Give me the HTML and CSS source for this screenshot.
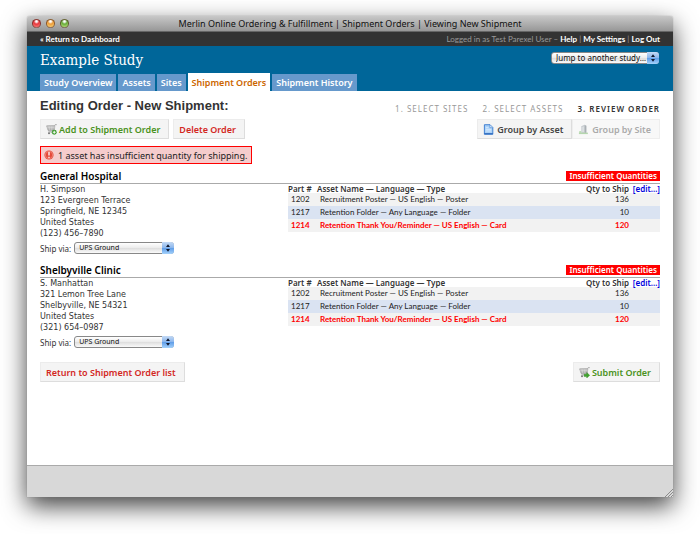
FILE: index.html
```html
<!DOCTYPE html>
<html lang="en">
<head>
<meta charset="utf-8">
<title>Merlin Online Ordering &amp; Fulfillment | Shipment Orders | Viewing New Shipment</title>
<link rel="stylesheet" href="styles.css">
</head>
<body>
<svg class="sprites" aria-hidden="true">
  <defs>
    <linearGradient id="aqua" x1="0" y1="0" x2="0" y2="1">
      <stop offset="0" stop-color="#c4daf5"/><stop offset=".48" stop-color="#8bb6ec"/>
      <stop offset=".52" stop-color="#5f9de8"/><stop offset="1" stop-color="#a5d2fb"/>
    </linearGradient>
    <linearGradient id="metal" x1="0" y1="0" x2="0" y2="1">
      <stop offset="0" stop-color="#d8d8d8"/><stop offset="1" stop-color="#8c8c8c"/>
    </linearGradient>
    <symbol id="stepper" viewBox="0 0 12 12">
      <rect width="12" height="12" fill="url(#aqua)"/>
      <path d="M6 2.2 8 5H4zM6 9.8 4 7h4z" fill="#10182c"/>
    </symbol>
    <symbol id="cart" viewBox="0 0 12 12">
      <path d="M.5 2.2 9.3 2l.8-1.3h1.6" fill="none" stroke="#999" stroke-width=".9"/>
      <path d="M.7 2.3h9L9 7H2.2z" fill="url(#metal)" stroke="#999" stroke-width=".5"/>
      <path d="M1.4 4.2h7.8M1.9 5.7h7M3.4 2.5l.6 4.3M6.3 2.5v4.3" stroke="#eee" stroke-width=".4"/>
      <path d="M9 7 8.3 8.6H2.6" fill="none" stroke="#888" stroke-width=".8"/>
      <circle cx="3.3" cy="10" r="1.1" fill="#777"/>
    </symbol>
  </defs>
</svg>
<div class="window">
  <header class="titlebar">
    <div class="lights">
      <span class="light red"></span><span class="light amber"></span><span class="light green"></span>
    </div>
    <div class="caption">Merlin Online Ordering &amp; Fulfillment | Shipment Orders | Viewing New Shipment</div>
  </header>

  <nav class="userbar">
    <a href="#">« Return to Dashboard</a>
    <div>Logged in as Test Parexel User – <a href="#">Help</a> | <a href="#">My Settings</a> | <a href="#">Log Out</a></div>
  </nav>

  <div class="masthead">
    <div class="brand">
      <div class="study">Example Study</div>
      <span class="picker jump">
        <select aria-label="Jump to another study"><option>Jump to another study…</option></select>
        <svg aria-hidden="true"><use href="#stepper"/></svg>
      </span>
    </div>
    <nav class="tabs">
      <a href="#">Study Overview</a>
      <a href="#">Assets</a>
      <a href="#">Sites</a>
      <a href="#" class="current" aria-current="page">Shipment Orders</a>
      <a href="#">Shipment History</a>
    </nav>
  </div>

  <main>
    <div class="heading">
      <h1>Editing Order - New Shipment:</h1>
      <ol class="steps">
        <li>1. Select Sites</li>
        <li>2. Select Assets</li>
        <li class="current">3. Review Order</li>
      </ol>
    </div>

    <div class="toolbar">
      <div class="actions">
        <button class="go" type="button">
          <svg viewBox="0 0 12 12" aria-hidden="true"><use href="#cart"/><circle cx="9" cy="9" r="2.7" fill="#3d9b2c"/><path d="M9 7.4v3.2M7.4 9h3.2" stroke="#fff" stroke-width="1"/></svg>
          Add to Shipment Order</button>
        <button class="danger" type="button">Delete Order</button>
      </div>
      <div class="grouping">
        <button type="button">
          <svg viewBox="0 0 12 12" aria-hidden="true"><path d="M1.5.8h6.2l3 3v7.4H1.5z" fill="#a9d0f7" stroke="#3478cf" stroke-width="1"/><path d="M7.5 1v3h3" fill="#e9f4ff" stroke="#3478cf" stroke-width=".6"/><path d="M3 4h3M3 5.8h6M3 7.6h6" stroke="#dcedff" stroke-width=".9"/><path d="M1.5 10.6h9.2" stroke="#2a66bb" stroke-width="1.2"/></svg>
          Group by Asset</button>
        <button type="button" disabled>
          <svg viewBox="0 0 12 12" aria-hidden="true"><path d="M3.5 2.5 7 .8v9.4H3.5z" fill="#c9ced2"/><path d="M7 .8 9.2 2v8.2H7z" fill="#aab0b5"/><path d="M4.6 3.2v5.6M5.9 2.8v6" stroke="#eef2f5" stroke-width=".6"/><path d="M1 10.2h9.8" stroke="#b5d6ae" stroke-width="1.6"/><circle cx="2.4" cy="8.8" r="1.3" fill="#bcdcb4"/></svg>
          Group by Site</button>
      </div>
    </div>

    <div class="alert" role="alert">
      <svg viewBox="0 0 10 10" aria-hidden="true"><circle cx="5" cy="5" r="4.6" fill="#e5493a"/><circle cx="5" cy="5" r="3.7" fill="none" stroke="#f3a196" stroke-width=".6"/><path d="M5 2v3.6M5 6.8v1.3" stroke="#fff" stroke-width="1.3"/></svg>
      1 asset has insufficient quantity for shipping.
    </div>

    <section class="site">
      <div class="site-head"><h2>General Hospital</h2><strong class="badge">Insufficient Quantities</strong></div>
      <div class="site-body">
        <div class="where">
          <address>H. Simpson<br>123 Evergreen Terrace<br>Springfield, NE 12345<br>United States<br>(123) 456–7890</address>
          <div class="via">
            <label for="via1">Ship via:</label>
            <span class="picker"><select id="via1"><option>UPS Ground</option></select><svg aria-hidden="true"><use href="#stepper"/></svg></span>
          </div>
        </div>
        <table>
          <thead><tr><th>Part #</th><th>Asset Name — Language — Type</th><th class="qty">Qty to Ship</th><th class="edit"><a href="#">[edit…]</a></th></tr></thead>
          <tbody>
            <tr><td>1202</td><td>Recruitment Poster — US English — Poster</td><td class="qty">136</td><td></td></tr>
            <tr><td>1217</td><td>Retention Folder — Any Language — Folder</td><td class="qty">10</td><td></td></tr>
            <tr class="short"><td>1214</td><td>Retention Thank You/Reminder — US English — Card</td><td class="qty">120</td><td></td></tr>
          </tbody>
        </table>
      </div>
    </section>

    <section class="site">
      <div class="site-head"><h2>Shelbyville Clinic</h2><strong class="badge">Insufficient Quantities</strong></div>
      <div class="site-body">
        <div class="where">
          <address>S. Manhattan<br>321 Lemon Tree Lane<br>Shelbyville, NE 54321<br>United States<br>(321) 654–0987</address>
          <div class="via">
            <label for="via2">Ship via:</label>
            <span class="picker"><select id="via2"><option>UPS Ground</option></select><svg aria-hidden="true"><use href="#stepper"/></svg></span>
          </div>
        </div>
        <table>
          <thead><tr><th>Part #</th><th>Asset Name — Language — Type</th><th class="qty">Qty to Ship</th><th class="edit"><a href="#">[edit…]</a></th></tr></thead>
          <tbody>
            <tr><td>1202</td><td>Recruitment Poster — US English — Poster</td><td class="qty">136</td><td></td></tr>
            <tr><td>1217</td><td>Retention Folder — Any Language — Folder</td><td class="qty">10</td><td></td></tr>
            <tr class="short"><td>1214</td><td>Retention Thank You/Reminder — US English — Card</td><td class="qty">120</td><td></td></tr>
          </tbody>
        </table>
      </div>
    </section>

    <div class="toolbar closing">
      <button class="danger" type="button">Return to Shipment Order list</button>
      <button class="go" type="button">
        <svg viewBox="0 0 12 12" aria-hidden="true"><use href="#cart"/><path d="M5.6 7.8h2.8V5.9l3.3 3.2-3.3 3v-1.700H5.600z" fill="#3fa52d" stroke="#2b7d1d" stroke-width=".4"/></svg>
        Submit Order</button>
    </div>
  </main>

  <footer>
    <svg viewBox="0 0 8 8" aria-hidden="true"><path d="M0 8 8 0M3 8l5-5M6 8l2-2" stroke="#777" stroke-width=".8"/></svg>
  </footer>
</div>
</body>
</html>
```
FILE: styles.css
```css
* { box-sizing: border-box; }

body {
  margin: 0;
  min-height: 100vh;
  padding: 16px 27px 37px;
  display: flex;
  background: #fff;
  color: #333;
  font: 9px/11px "Noto Sans", "Open Sans", sans-serif;
}

a { color: inherit; text-decoration: none; }
h1, h2, ol { margin: 0; padding: 0; }
button, select { font: inherit; }
svg { display: block; flex: none; }
.sprites { position: absolute; width: 0; height: 0; }

.window {
  flex: 1;
  display: flex;
  flex-direction: column;
  background: #fff;
  border-radius: 3px 3px 0 0;
  box-shadow: 0 0 1px #777, 0 9px 24px rgba(0, 0, 0, .75);
}

.titlebar {
  display: grid;
  grid-template-columns: 1fr auto 1fr;
  align-items: center;
  height: 16px;
  padding: 0 5px;
  border-radius: 3px 3px 0 0;
  border-bottom: 1px solid #666;
  background: linear-gradient(#c8c8c8, #979797);
  color: #111;
}
.lights { display: flex; gap: 5px; }
.light {
  width: 9px;
  height: 9px;
  border-radius: 50%;
  border: 1px solid rgba(70, 30, 20, .6);
}
.red { background: radial-gradient(circle at 50% 20%, #fff 0 10%, #e6343a 40%, #ff8b85); }
.amber { background: radial-gradient(circle at 50% 20%, #fff 0 10%, #ec9a35 40%, #ffe08a); }
.green { background: radial-gradient(circle at 50% 20%, #fff 0 10%, #66a936 40%, #c5f08c); }

.userbar {
  display: flex;
  justify-content: space-between;
  align-items: center;
  height: 14px;
  padding: 0 13px;
  background: #333;
  color: #999;
  font-family: Lato, "Noto Sans", sans-serif;
  font-size: 8px;
}
.userbar a { color: #fff; font-weight: 700; }

.masthead {
  display: flex;
  flex-direction: column;
  justify-content: space-between;
  height: 45px;
  padding: 4px 13px 0;
  background: #069;
}
.brand { display: flex; justify-content: space-between; align-items: flex-start; }
.study {
  color: #fff;
  font: 15px/20px "DejaVu Serif Condensed", "DejaVu Serif", serif;
}

.picker { position: relative; display: flex; }
.picker select {
  appearance: none;
  width: 100px;
  height: 12px;
  margin: 0;
  padding: 0 12px 0 4px;
  border: 1px solid #888;
  border-radius: 3px;
  background: linear-gradient(#fff, #ececec 48%, #dedede 52%, #fafafa);
  color: #111;
  font-size: 7px;
  line-height: 10px;
}
.picker svg {
  position: absolute;
  top: 0;
  right: 0;
  width: 12px;
  height: 12px;
  border-radius: 0 3px 3px 0;
  pointer-events: none;
}
.jump { margin: 2px 1px 0 0; }
.jump select { width: 108px; font-size: 8px; }

.tabs {
  display: flex;
  align-items: flex-end;
  gap: 2px;
  font-weight: 600;
}
.tabs a {
  padding: 3px 4px;
  background: #69c;
  color: #fff;
  line-height: 11px;
}
.tabs .current { padding-top: 4px; background: #fff; color: #c60; }

main { flex: 1; padding: 6px 13px 0; }

.heading { display: flex; justify-content: space-between; align-items: center; height: 18px; }
h1 { font: bold 13px/18px "Liberation Sans", sans-serif; }
.steps {
  display: flex;
  gap: 14px;
  padding-top: 4px;
  list-style: none;
  color: #999;
  font-size: 8px;
  letter-spacing: 1px;
  text-transform: uppercase;
}
.steps .current { color: #333; font-weight: 600; }

.toolbar { display: flex; justify-content: space-between; margin-top: 4px; }
.actions { display: flex; gap: 4px; }
.grouping { display: flex; }
.toolbar button {
  display: flex;
  align-items: center;
  gap: 2px;
  height: 20px;
  padding: 0 8px 0 5px;
  border: 1px solid #ececec;
  border-bottom-color: #ddd;
  border-right-color: #ddd;
  background: #f4f4f4;
  color: #444;
  font-weight: 600;
}
.toolbar button svg { width: 11px; height: 11px; }
.grouping button { gap: 3px; }
.toolbar .go { color: #4a9221; }
.toolbar .danger { color: #d3281f; }
.toolbar button:disabled { color: #aaa; background: #f8f8f8; border-color: #eee; }
.closing { margin-top: 3px; }

.alert {
  display: flex;
  align-items: center;
  gap: 4px;
  width: fit-content;
  height: 18px;
  margin: 7px 0;
  padding: 0 4px 0 3px;
  border: 1px solid #f00;
  background: #f5cccc;
  color: #222;
}
.alert svg { width: 10px; height: 10px; }

.site { min-height: 94px; }
.site-head {
  display: flex;
  justify-content: space-between;
  align-items: center;
  height: 13px;
  padding-bottom: 2px;
  border-bottom: 1px solid #aaa;
}
h2 { color: #000; font-size: 10px; line-height: 11px; font-weight: 600; }
.badge { padding: 0 3px; background: #f00; color: #fff; font-size: 8px; line-height: 10px; font-weight: 600; }

.site-body { display: grid; grid-template-columns: 2fr 3fr; align-items: start; }
address { font: 8px/11px "DejaVu Sans", sans-serif; }
.via { display: flex; align-items: center; gap: 3px; margin-top: 3px; font-size: 8px; }

table {
  width: 100%;
  border-collapse: collapse;
  table-layout: fixed;
  color: #222;
  font-size: 8px;
}
th, td { height: 13px; padding: 0 3px; line-height: 11px; text-align: left; white-space: nowrap; }
td { font-family: Lato, "Noto Sans", sans-serif; }
th { height: 9px; padding: 0; line-height: 9px; font-weight: 600; color: #333; }
th:nth-child(1) { width: 29px; }
th:nth-child(3) { width: 50px; }
th:nth-child(4) { width: 31px; }
th.edit { text-align: right; color: #00d; }
th.qty, td.qty { padding: 0; text-align: right; }
tbody tr { background: #f2f2f2; }
tbody tr:nth-child(2) { background: #dae3f2; }
tbody .short { color: #f00; font-weight: 700; }

footer {
  display: flex;
  justify-content: flex-end;
  align-items: flex-end;
  height: 32px;
  border-top: 1px solid #aaa;
  background: #d8d8d8;
}
footer svg { width: 8px; height: 8px; }
```
